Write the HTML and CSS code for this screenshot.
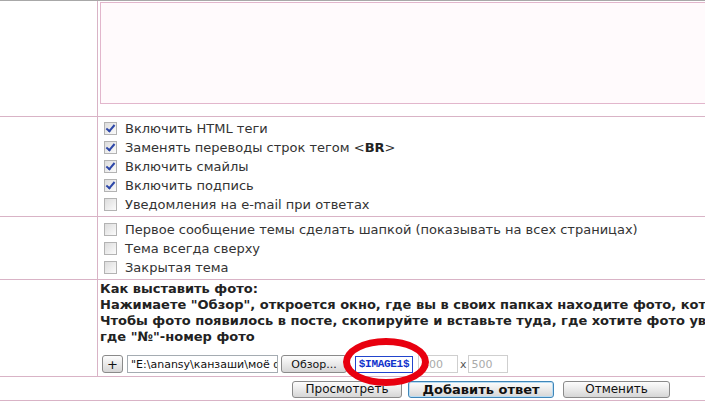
FILE: index.html
```html
<!DOCTYPE html>
<html>
<head>
<meta charset="utf-8">
<link rel="stylesheet" href="styles.css">
</head>
<body>
<div class="form">
  <div class="row row-text">
    <div class="left"></div>
    <div class="right">
      <div class="textarea"></div>
    </div>
  </div>
  <div class="row row-opts">
    <div class="left"></div>
    <div class="right">
      <label class="opt"><span class="cb checked"></span>Включить HTML теги</label>
      <label class="opt"><span class="cb checked"></span>Заменять переводы строк тегом &lt;<b>BR</b>&gt;</label>
      <label class="opt"><span class="cb checked"></span>Включить смайлы</label>
      <label class="opt"><span class="cb checked"></span>Включить подпись</label>
      <label class="opt"><span class="cb"></span>Уведомления на e-mail при ответах</label>
    </div>
  </div>
  <div class="row row-topic">
    <div class="left"></div>
    <div class="right">
      <label class="opt"><span class="cb"></span>Первое сообщение темы сделать шапкой (показывать на всех страницах)</label>
      <label class="opt"><span class="cb"></span>Тема всегда сверху</label>
      <label class="opt"><span class="cb"></span>Закрытая тема</label>
    </div>
  </div>
  <div class="row row-photo">
    <div class="left"></div>
    <div class="right">
      <div class="howto">Как выставить фото:<br>Нажимаете "Обзор", откроется окно, где вы в своих папках находите фото, которое хотите выставить, и нажимаете "Открыть".<br>Чтобы фото появилось в посте, скопируйте и вставьте туда, где хотите фото увидеть, код $IMAGE№$,<br>где "№"-номер фото</div>
      <div class="files">
        <span class="btn btn-plus">+</span>
        <span class="inp inp-path">"E:\anansy\канзаши\моё фото.jpg"</span>
        <span class="btn btn-browse">Обзор...</span>
        <span class="code">$IMAGE1$</span>
        <span class="inp inp-dim">400</span>
        <span class="times">x</span>
        <span class="inp inp-dim">500</span>
        <span class="mark"></span>
      </div>
    </div>
  </div>
  <div class="row row-buttons">
    <span class="btn btn-preview">Просмотреть</span>
    <span class="btn btn-submit">Добавить ответ</span>
    <span class="btn btn-cancel">Отменить</span>
  </div>
</div>
</body>
</html>
```
FILE: styles.css
```css
html, body {
  margin: 0;
  padding: 0;
  background: #fff;
  overflow: hidden;
}
body {
  width: 705px;
  height: 402px;
  font-family: "DejaVu Sans", Verdana, sans-serif;
  font-size: 13px;
  color: #333;
}
.form {
  width: 962px;
  border-top: 1px solid #a8a8a8;
}
.row {
  display: flex;
  border-bottom: 1px solid #d9b3c6;
}
.left {
  width: 97px;
  flex: none;
  border-right: 1px solid #d9b3c6;
}
.right {
  flex: 1;
  min-width: 0;
  padding-left: 2px;
}
.row-text { height: 115px; }
.textarea {
  margin-top: 1px;
  height: 100px;
  border: 1px solid #e2b6cc;
  background: #fffafc;
  width: 900px;
}
.row-opts { height: 99px; }
.row-opts .right { padding-top: 2px; padding-left: 6px; }
.row-topic { height: 62px; }
.row-topic .right { padding-top: 3px; padding-left: 6px; }
.opt {
  display: flex;
  align-items: center;
  height: 19px;
  white-space: nowrap;
}
.opt b { font-weight: bold; color: #222; }
.cb {
  width: 11px;
  height: 11px;
  border: 1px solid #b3b3b3;
  background: linear-gradient(135deg, #dcdcdc, #fbfbfb);
  margin-right: 8px;
  flex: none;
  position: relative;
}
.cb.checked::after {
  content: "";
  position: absolute;
  left: 3px;
  top: 0px;
  width: 3px;
  height: 7px;
  border: solid #2d47a8;
  border-width: 0 2px 2px 0;
  transform: rotate(40deg);
}
.row-photo { height: 96px; }
.row-photo .right { padding-top: 1px; }
.howto {
  font-weight: bold;
  font-size: 13px;
  line-height: 16px;
  color: #222;
  white-space: nowrap;
}
.files {
  position: relative;
  display: flex;
  align-items: center;
  margin-top: 10px;
  padding-left: 1px;
  height: 18px;
}
.btn {
  display: inline-flex;
  align-items: center;
  justify-content: center;
  box-sizing: border-box;
  border: 1px solid #8a8a8a;
  border-radius: 3px;
  background: linear-gradient(#fdfdfd, #e6e6e6 60%, #d6d6d6);
  font-family: Tahoma, "DejaVu Sans", sans-serif;
  font-size: 11px;
  color: #111;
  white-space: nowrap;
  overflow: hidden;
}
.btn-plus {
  width: 21px;
  height: 18px;
  font-size: 13px;
  margin-left: 1px;
}
.inp {
  box-sizing: border-box;
  height: 18px;
  border: 1px solid #a5acb2;
  background: #fff;
  display: inline-flex;
  align-items: center;
  padding-left: 3px;
  white-space: nowrap;
  overflow: hidden;
  font-size: 11px;
  color: #111;
}
.inp-path {
  width: 151px;
  margin-left: 4px;
}
.btn-browse {
  width: 66px;
  height: 18px;
  margin-left: 3px;
}
.code {
  box-sizing: border-box;
  height: 17px;
  width: 58px;
  margin-left: 8px;
  border: 1px solid #2244cc;
  font-family: "Liberation Mono", "Courier New", monospace;
  font-weight: bold;
  font-size: 11px;
  color: #1133cc;
  display: inline-flex;
  align-items: center;
  justify-content: center;
  letter-spacing: -0.3px;
}
.inp-dim {
  width: 40px;
  border-color: #cfcfcf;
  color: #aaa;
}
.code + .inp-dim { margin-left: 5px; }
.times {
  font-size: 11px;
  color: #555;
  margin: 0 1px 0 2px;
}
.mark {
  position: absolute;
  left: 243px;
  top: -17px;
  width: 72px;
  height: 34px;
  border: 7px solid #e8000f;
  border-radius: 50%;
}
.row-buttons {
  height: 23px;
  align-items: center;
  justify-content: center;
  gap: 0;
}
.row-buttons .btn {
  height: 17px;
  font-size: 12px;
  margin-top: 1px;
}
.btn-preview { width: 110px; }
.btn-submit {
  width: 146px;
  margin-left: 6px;
  font-weight: bold;
  font-size: 13px !important;
  border-color: #3f86b8;
  box-shadow: inset 0 0 0 1px #b9dcf3;
}
.btn-cancel { width: 107px; margin-left: 9px; }
```
